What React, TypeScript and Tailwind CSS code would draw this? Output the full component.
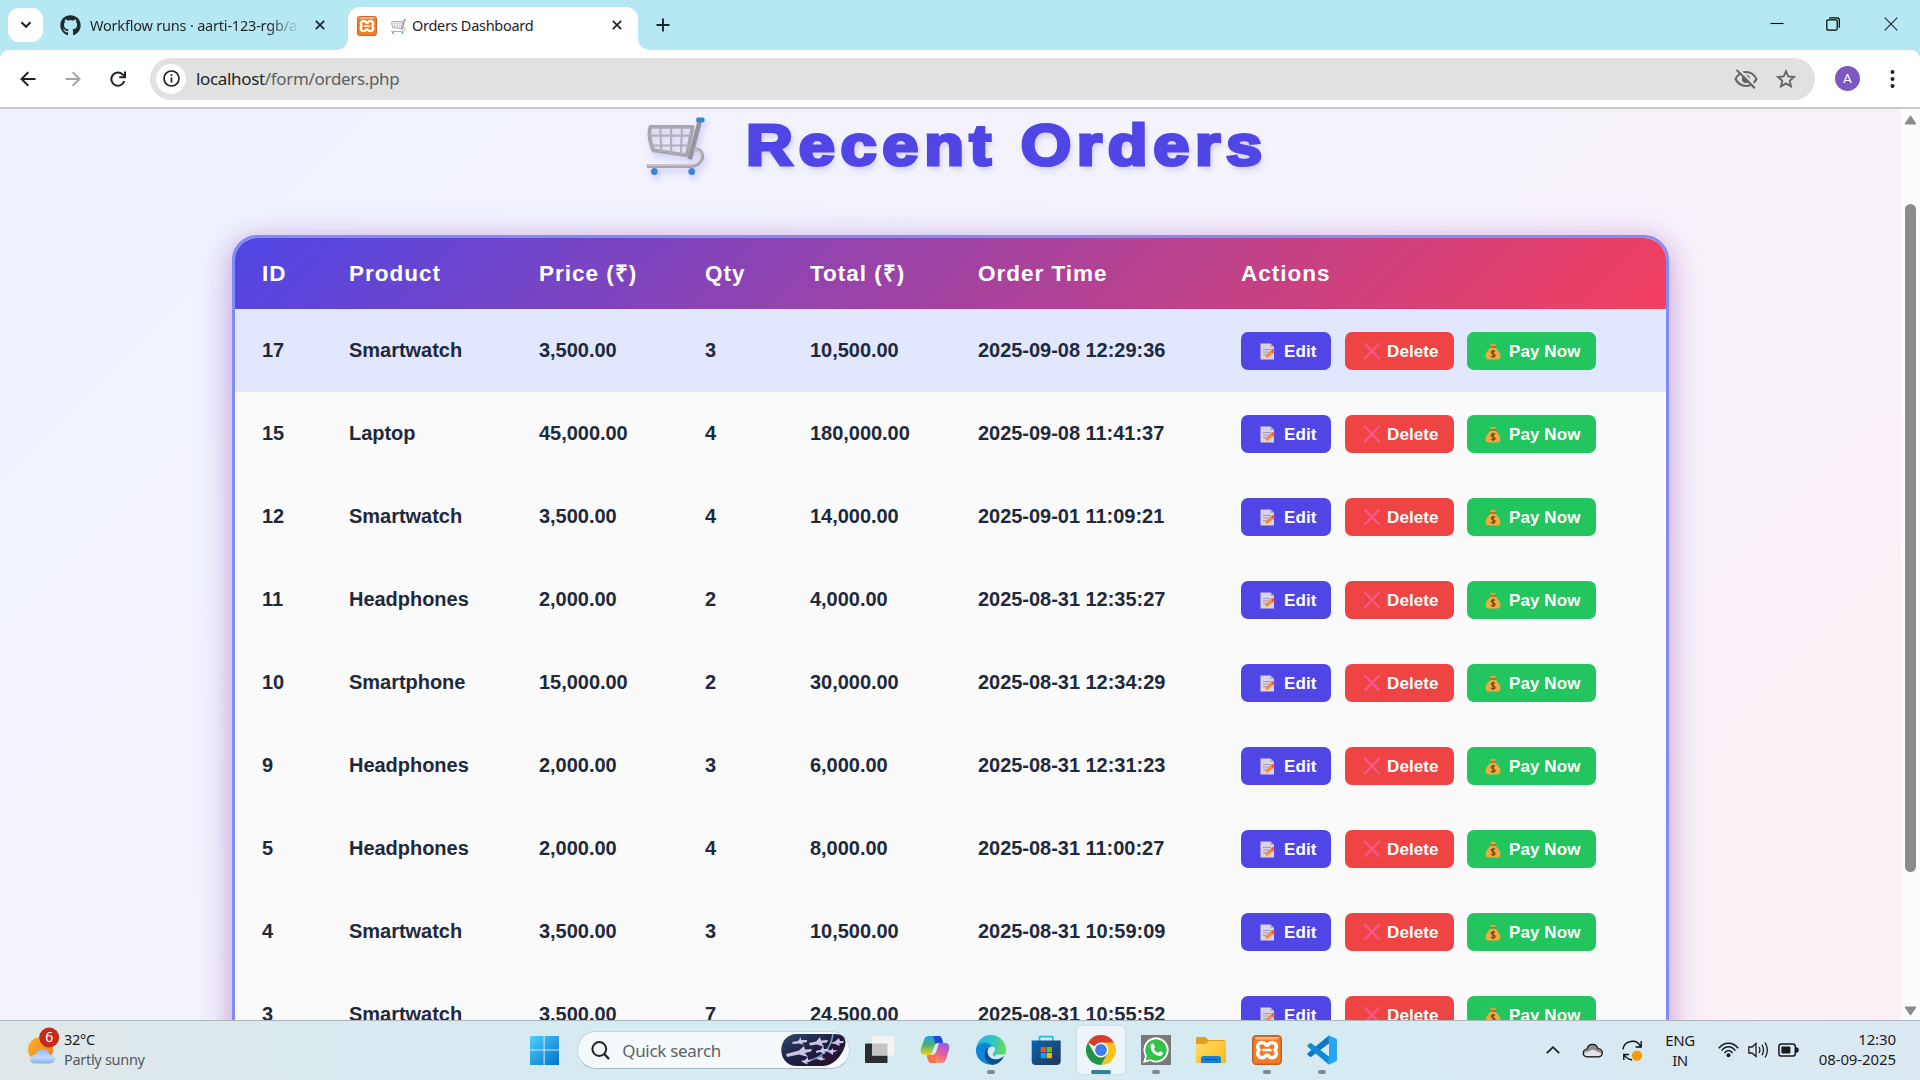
import React from "react";
import { FaGithub } from "react-icons/fa";

const orders = [
  ["17", "Smartwatch", "3,500.00", "3", "10,500.00", "2025-09-08 12:29:36"],
  ["15", "Laptop", "45,000.00", "4", "180,000.00", "2025-09-08 11:41:37"],
  ["12", "Smartwatch", "3,500.00", "4", "14,000.00", "2025-09-01 11:09:21"],
  ["11", "Headphones", "2,000.00", "2", "4,000.00", "2025-08-31 12:35:27"],
  ["10", "Smartphone", "15,000.00", "2", "30,000.00", "2025-08-31 12:34:29"],
  ["9", "Headphones", "2,000.00", "3", "6,000.00", "2025-08-31 12:31:23"],
  ["5", "Headphones", "2,000.00", "4", "8,000.00", "2025-08-31 11:00:27"],
  ["4", "Smartwatch", "3,500.00", "3", "10,500.00", "2025-08-31 10:59:09"],
  ["3", "Smartwatch", "3,500.00", "7", "24,500.00", "2025-08-31 10:55:52"],
];

const columns = ["ID", "Product", "Price (₹)", "Qty", "Total (₹)", "Order Time", "Actions"];

const rowGrid = "grid grid-cols-[87px_190px_166px_105px_168px_263px_1fr] items-center pl-[27px]";

function Cart({ className }: { className: string }) {
  return (
    <svg viewBox="0 0 60 60" className={className} fill="none">
      <path d="M4 10 L47 10 L41 39 L7 34 Q1 20 4 10Z" stroke="#a9a6ae" strokeWidth="3.8" strokeLinejoin="round" />
      <path d="M3.5 19 H45 M5 29 H43 M14 11 L15 35 M25 11 V37 M36 11 L35 38" stroke="#b3b0b6" strokeWidth="2.2" />
      <path d="M54 5 L44 43" stroke="#96939b" strokeWidth="4.6" />
      <path d="M49 33 C57 33 59 41 54 46 C52 49 48 50 44 50 H2" stroke="#aaa4ae" strokeWidth="3.8" strokeLinecap="round" />
      <path d="M49 33 C56 34 57 41 53 45 C51 48 48 49 44 49 H2" stroke="#d2cfd6" strokeWidth="1.3" strokeLinecap="round" />
      <rect x="50.5" y="0.5" width="8.5" height="5" rx="1.6" fill="#3a83d0" />
      <ellipse cx="8" cy="55.5" rx="3.4" ry="3.6" fill="#3d86d2" />
      <ellipse cx="46" cy="55.5" rx="3.4" ry="3.6" fill="#3d86d2" />
    </svg>
  );
}

function Memo() {
  return (
    <svg viewBox="0 0 16 17" className="h-[17px] w-4" fill="none">
      <path d="M0.5 0.5 H10.5 L14 4 V16.5 H0.5 Z" fill="#d9d3e3" />
      <path d="M10.5 0.5 L14 4 H10.5 Z" fill="#b3a9c0" />
      <path d="M3 6.5 H11 M3 9 H9 M3 11.5 H6" stroke="#9d96ac" strokeWidth="0.9" />
      <path d="M5.8 14 L12.2 8.6" stroke="#fb8c3c" strokeWidth="3.4" />
      <path d="M12 8.8 L14 7.2" stroke="#f4524d" strokeWidth="3.4" />
      <path d="M3.6 16.2 L4.6 13 L6.9 15.4 Z" fill="#fbd0a0" />
    </svg>
  );
}

function Cross() {
  return (
    <svg viewBox="0 0 18 18" className="h-[18px] w-[18px]" fill="none">
      <path d="M2 1.8 L16 16.2 M16 1.8 L2 16.2" stroke="#fb558a" strokeWidth="2.3" strokeLinecap="round" />
    </svg>
  );
}

function MoneyBag() {
  return (
    <svg viewBox="0 0 16 17" className="h-[17px] w-4" fill="none">
      <path d="M5 0.8 L7 1.6 L8 0.4 L9.4 1.6 L11 0.8 L10 4 H6 Z" fill="#f0a23a" />
      <path d="M5.8 4.4 H10.2 C13 7 15.5 10 15.5 13 C15.5 15.6 14 16.6 11.5 16.6 H4.5 C2 16.6 0.5 15.6 0.5 13 C0.5 10 3 7 5.8 4.4Z" fill="#efa93c" />
      <path d="M5.6 3.9 H10.4" stroke="#a5622a" strokeWidth="1.2" strokeLinecap="round" />
      <path d="M10 8.4 C9.3 7.6 6.3 7.5 6.3 9.3 C6.3 11.2 10.1 10.5 10.1 12.4 C10.1 14.2 6.7 14.1 6 13 M8.1 6.8 V15" stroke="#6b4324" strokeWidth="1.2" />
    </svg>
  );
}

function Xampp({ className }: { className: string }) {
  return (
    <svg viewBox="0 0 30 30" className={className} fill="none">
      <rect x="0.7" y="0.7" width="28.6" height="28.6" rx="3.5" fill="#f57a22" stroke="#b9602a" strokeWidth="1.4" />
      <path d="M2.5 2 H27.5 L25 4.5 H5 Z" fill="#fbb584" />
      <path
        d="M10.3 7.5 C5.8 7.5 4.4 11.5 7 15 C4.4 18.5 5.8 22.7 10.3 22.7 C13.6 22.7 13 20 15 20 C17 20 16.4 22.7 19.7 22.7 C24.2 22.7 25.6 18.5 23 15 C25.6 11.5 24.2 7.5 19.7 7.5 C16.4 7.5 17 10.2 15 10.2 C13 10.2 13.6 7.5 10.3 7.5 Z"
        stroke="white"
        strokeWidth="3.6"
        strokeLinejoin="round"
      />
      <path d="M11.5 15 H18.5" stroke="white" strokeWidth="2.6" strokeLinecap="round" />
    </svg>
  );
}

function CloseX({ className }: { className: string }) {
  return (
    <svg viewBox="0 0 10 10" className={className} fill="none" stroke="#1f2327" strokeWidth="1.7">
      <path d="M0.8 0.8 L9.2 9.2 M9.2 0.8 L0.8 9.2" />
    </svg>
  );
}

function TabStrip() {
  return (
    <div className="flex h-[50px] items-start bg-[#b5e8f2] pl-2 text-[#1f2327]">
      <div className="mt-2 flex h-[34px] w-[35px] items-center justify-center rounded-[11px] bg-white">
        <svg viewBox="0 0 12 8" className="h-[8px] w-[12px]" fill="none" stroke="#1f2327" strokeWidth="2.1">
          <path d="M1.5 1.3 L6 5.8 L10.5 1.3" />
        </svg>
      </div>
      <div className="flex h-[50px] w-[305px] items-center pl-[17px]">
        <FaGithub className="h-[21px] w-[21px] shrink-0 text-[#24292f]" />
        <div className="mt-[2px] ml-[9px] w-[210px] overflow-hidden whitespace-nowrap bg-gradient-to-r from-[#1f2327] from-85% to-transparent bg-clip-text text-[14.5px] tracking-[-0.2px] text-transparent">
          Workflow runs · aarti-123-rgb/a
        </div>
        <CloseX className="ml-[15px] h-[10px] w-[10px] shrink-0" />
      </div>
      <div className="relative mt-[7px] flex h-[43px] w-[290px] items-center rounded-t-[12px] bg-white pl-[9px]">
        <svg viewBox="0 0 12 12" className="absolute bottom-0 -left-3 h-3 w-3">
          <path d="M12 0 V12 H0 C7 12 12 7 12 0Z" fill="white" />
        </svg>
        <svg viewBox="0 0 12 12" className="absolute -right-3 bottom-0 h-3 w-3">
          <path d="M0 0 V12 H12 C5 12 0 7 0 0Z" fill="white" />
        </svg>
        <Xampp className="-mt-[6px] h-[20px] w-[20px]" />
        <Cart className="-mt-[5px] ml-[14px] h-[15px] w-[15px]" />
        <div className="-mt-[5px] ml-[6px] w-[200px] whitespace-nowrap text-[14.5px] tracking-[-0.28px]">Orders Dashboard</div>
        <CloseX className="-mt-[7px] h-[10px] w-[10px] shrink-0" />
      </div>
      <svg viewBox="0 0 14 14" className="mt-[18px] ml-[18px] h-[14px] w-[14px]" stroke="#1f2327" strokeWidth="1.9">
        <path d="M7 0.5 V13.5 M0.5 7 H13.5" />
      </svg>
      <div className="mt-[17px] ml-auto flex items-center">
        <svg viewBox="0 0 14 14" className="mr-[42px] h-[14px] w-[14px]" stroke="#000" strokeWidth="1.1">
          <path d="M0.5 6.5 H13.5" />
        </svg>
        <svg viewBox="0 0 14 14" className="mr-[44px] h-[14px] w-[14px]" fill="none" stroke="#000" strokeWidth="1.2">
          <rect x="0.8" y="2.8" width="10.4" height="10.4" rx="1.2" />
          <path d="M3.3 0.8 H11 Q13.3 0.8 13.3 3 V10.8" />
        </svg>
        <svg viewBox="0 0 14 14" className="mr-[22px] h-[14px] w-[14px]" stroke="#222" strokeWidth="1.1">
          <path d="M0.7 0.7 L13.3 13.3 M13.3 0.7 L0.7 13.3" />
        </svg>
      </div>
    </div>
  );
}

function Toolbar() {
  return (
    <div className="bg-[#b5e8f2]">
      <div className="flex h-[59px] items-center rounded-t-[9px] border-b-2 border-[#c9c9c9] bg-white pl-[20px] text-[#1f2327]">
        <svg viewBox="0 0 16 16" className="h-4 w-4" fill="none" stroke="#1f2327" strokeWidth="2">
          <path d="M15.5 8 H2 M8.3 1.2 L1.5 8 L8.3 14.8" />
        </svg>
        <svg viewBox="0 0 16 16" className="ml-[29px] h-4 w-4" fill="none" stroke="#a2a4a6" strokeWidth="2">
          <path d="M0.5 8 H14 M7.7 1.2 L14.5 8 L7.7 14.8" />
        </svg>
        <svg viewBox="0 0 16 16" className="ml-[29px] h-4 w-4" fill="none" stroke="#1f2327" strokeWidth="2">
          <path d="M14.3 10 A6.6 6.6 0 1 1 12.6 3.4 L14.5 5.3" />
          <path d="M15 0.5 V6.2 H9.3" />
        </svg>
        <div className="ml-[24px] flex h-[42px] w-[1665px] items-center rounded-full bg-[#e1e1e1] pl-[6px] pr-[19px]">
          <div className="flex h-[30px] w-[30px] items-center justify-center rounded-full bg-white">
            <svg viewBox="0 0 17 17" className="h-[17px] w-[17px]" fill="none" stroke="#1f2327" strokeWidth="1.7">
              <circle cx="8.5" cy="8.5" r="7.5" />
              <path d="M8.5 7.6 V12.6 M8.5 4.3 V6.1" />
            </svg>
          </div>
          <div className="mt-px ml-[10px] text-[17px] tracking-[-0.33px] text-[#5c5f61]">
            <span className="text-[#1f2327]">localhost</span>/form/orders.php
          </div>
          <svg viewBox="0 0 24 20" className="ml-auto h-[20px] w-[24px]" fill="none" stroke="#606366" strokeWidth="2">
            <path d="M1.5 10 C4 5 8 3 12 3 C16 3 20 5 22.5 10 C20 15 16 17 12 17 C8 17 4 15 1.5 10Z" />
            <circle cx="12" cy="10" r="3.7" fill="#606366" strokeWidth="1" />
            <path d="M4.8 0.2 L21.8 17.2" stroke="#e1e1e1" strokeWidth="2.2" />
            <path d="M2.5 0.9 L20.8 19.3" />
          </svg>
          <svg viewBox="0 0 20 20" className="ml-[18px] h-[20px] w-[20px]" fill="none" stroke="#606366" strokeWidth="1.8">
            <path d="M10 2.2 L12.3 7.5 L18 8 L13.7 11.8 L15 17.4 L10 14.4 L5 17.4 L6.3 11.8 L2 8 L7.7 7.5Z" />
          </svg>
        </div>
        <div className="ml-[20px] flex h-[25px] w-[25px] items-center justify-center rounded-full bg-[#7e57c2] font-[Roboto] text-[13.5px] text-white">A</div>
        <svg viewBox="0 0 5 20" className="ml-[30px] h-[20px] w-[5px]" fill="#1f2327">
          <circle cx="2.5" cy="3" r="2" />
          <circle cx="2.5" cy="10" r="2" />
          <circle cx="2.5" cy="17" r="2" />
        </svg>
      </div>
    </div>
  );
}

function Actions() {
  return (
    <div className="mt-px flex text-[17px] leading-[20px] tracking-[0.1px] text-white">
      <button className="flex h-[38px] w-[90px] items-center rounded-[7px] bg-[#4f46e5] pl-[19px]">
        <Memo />
        <span className="ml-2 pt-[2px]">Edit</span>
      </button>
      <button className="ml-[14px] flex h-[38px] w-[109px] items-center rounded-[7px] bg-[#ef4444] pl-[18px]">
        <Cross />
        <span className="ml-[6px] pt-[2px]">Delete</span>
      </button>
      <button className="ml-[13px] flex h-[38px] w-[129px] items-center rounded-[7px] bg-[#22c55e] pl-[18px]">
        <MoneyBag />
        <span className="ml-2 pt-[2px]">Pay Now</span>
      </button>
    </div>
  );
}

function OrdersPage() {
  return (
    <main className="flex h-[911px] overflow-hidden">
      <div className="flex flex-1 flex-col items-center overflow-hidden bg-[linear-gradient(135deg,#eef2ff_0%,#f5f3fc_45%,#fdf1f6_100%)] font-['Liberation_Sans',Arial,sans-serif] font-bold">
        <div className="flex h-[126px] w-full shrink-0 items-start pl-[646px]">
          <Cart className="mt-2 h-[59px] w-[60px] shrink-0 drop-shadow-[2px_4px_3px_rgba(79,70,229,0.25)]" />
          <h1 className="mt-[4px] ml-[40px] origin-left scale-x-[1.14] whitespace-nowrap text-[57px] leading-[64px] tracking-[5px] text-[#4f46e5] [-webkit-text-stroke:3.2px_#4f46e5] [text-shadow:2px_4px_6px_rgba(79,70,229,0.25)]">
            Recent Orders
          </h1>
        </div>
        <section className="h-[900px] w-[1437px] shrink-0 rounded-[25px] border-[3px] border-[#818cf8] bg-[#fafafa] shadow-[0_10px_38px_rgba(99,102,241,0.3),0_4px_25px_rgba(219,39,119,0.28)]">
          <div className={`${rowGrid} h-[71px] rounded-t-[22px] bg-[linear-gradient(135deg,#4f46e5,#f43f5e)] text-[22.5px] tracking-[1px] text-white`}>
            {columns.map((c) => (
              <div key={c}>{c}</div>
            ))}
          </div>
          {orders.map((row, i) => (
            <div key={row[0]} className={`${rowGrid} h-[83px] text-[20px] text-[#1e293b] ${i === 0 ? "bg-[#e0e7ff]" : ""}`}>
              {row.map((cell, j) => (
                <div key={j} className="pb-[2px] tracking-[-0.03px]">
                  {cell}
                </div>
              ))}
              <Actions />
            </div>
          ))}
        </section>
      </div>
      <div className="flex w-[19px] flex-col items-center bg-[#fcfcfc] pt-[6px] pb-[4px]">
        <svg viewBox="0 0 13 10" className="h-[10px] w-[13px]" fill="#8b8b8b" stroke="#8b8b8b" strokeLinejoin="round">
          <path d="M6.5 0.8 L12 9 H1Z" />
        </svg>
        <div className="mt-[79px] h-[668px] w-[11px] rounded-full bg-[#8b8b8b]" />
        <svg viewBox="0 0 13 10" className="mt-auto h-[10px] w-[13px]" fill="#8b8b8b" stroke="#8b8b8b" strokeLinejoin="round">
          <path d="M6.5 9.2 L12 1 H1Z" />
        </svg>
      </div>
    </main>
  );
}

function TaskCell({ children, bar, active }: { children: React.ReactNode; bar?: boolean; active?: boolean }) {
  return (
    <div className="flex w-[55.2px] justify-center">
      <div className={`flex h-[48px] w-[48px] flex-col items-center rounded-[5px] pt-[9px] ${active ? "bg-[#edf5fa] shadow-[0_0_1px_1px_rgba(120,150,170,0.12)]" : ""}`}>
        <div className="h-[30px] w-[30px]">{children}</div>
        {active && <div className="mt-[5px] h-1 w-5 rounded-full bg-[#2a8596]" />}
        {bar && <div className="mt-[5px] h-1 w-2 rounded-full bg-[#82888c]" />}
      </div>
    </div>
  );
}

function SearchArt() {
  return (
    <svg viewBox="0 0 66 32" className="h-8 w-[66px]">
      <defs>
        <linearGradient id="night" x1="0" y1="0" x2="1" y2="1">
          <stop offset="0" stopColor="#2c4a6c" />
          <stop offset="0.5" stopColor="#211c42" />
          <stop offset="1" stopColor="#2a1029" />
        </linearGradient>
        <clipPath id="pill">
          <path d="M16 0 H54 C62 0 66 5 64 12 C61 22 52 32 42 32 H16 C-5 32 -5 0 16 0Z" />
        </clipPath>
      </defs>
      <g clipPath="url(#pill)">
        <rect width="66" height="32" fill="url(#night)" />
        <path d="M52 0 C50 14 42 24 26 27" stroke="#6fa3c0" strokeWidth="1.6" fill="none" />
        <g fill="#c9c6e4">
          <path d="M11 8 L17 7 L20 3 L20 6 L26 6 L26 8 L21 9 L23 11 L18 9.5 L12 10Z" />
          <path d="M5 20 L18 16.5 L23 12 L24 15.5 L31 15 L30 17.5 L24 19 L27 23 L18 20.5 L6 23Z" />
          <path d="M28 9 L35 7.5 L39 3 L40 6.5 L47 6 L46 8.5 L41 9 L43 13 L36 10.5 L29 11.5Z" />
          <path d="M35 17 L40 15.5 L42 12 L43 15 L48 15 L47 17 L43 17.5 L44 20 L39 18 L35 19Z" />
          <path d="M49 9 L54 7.5 L58 4 L59 7 L63 7 L62 9 L58 9.5 L59 12 L54 10Z" />
          <path d="M45 17 L50 16 L52 14 L52 16 L57 16.5 L52 18.5 L52 21 L49 19Z" />
          <path d="M20 27 L24 26 L27 23 L27 26 L31 26.5 L26 28.5 L27 30.5 L23 29Z" />
          <path d="M35 24.5 L39 23 L42 22 L41 24 L45 25 L40 26.5Z" />
        </g>
      </g>
    </svg>
  );
}

function Taskbar() {
  return (
    <footer className="flex h-[60px] items-start border-t border-[#aab4ba] bg-[linear-gradient(90deg,#dfe7e8_0%,#dbe9ee_14%,#d6eaf2_30%,#d6eaf3_75%,#dbe8f1_100%)] text-[#1b1b1b]">
      <div className="flex w-[516px] pl-[27px] pt-[6px]">
        <svg viewBox="0 0 33 38" className="h-[38px] w-[33px]">
          <defs>
            <linearGradient id="sun" x1="0" y1="0" x2="1" y2="1">
              <stop offset="0" stopColor="#f6b62c" />
              <stop offset="1" stopColor="#f2791a" />
            </linearGradient>
            <linearGradient id="cloud" x1="0" y1="0" x2="0" y2="1">
              <stop offset="0" stopColor="#8fb8f2" />
              <stop offset="0.6" stopColor="#c3daf8" />
              <stop offset="1" stopColor="#88aeea" />
            </linearGradient>
          </defs>
          <circle cx="13.5" cy="22.5" r="12.5" fill="url(#sun)" />
          <path d="M8 36.5 C1 36.5 2 27.5 8 28 C10 20.5 21 20.5 22.5 27.5 C30 27.5 30 36.5 23 36.5Z" fill="url(#cloud)" />
          <circle cx="22.2" cy="10.5" r="10" fill="#c42b1c" />
          <text x="22.2" y="15.4" textAnchor="middle" fontSize="14" fill="white" fontFamily="Noto Sans">6</text>
        </svg>
        <div className="ml-1 pt-[2px] text-[14.5px] leading-5 tracking-[-0.3px]">
          <div>32°C</div>
          <div className="text-[#54595c]">Partly sunny</div>
        </div>
      </div>
      <div className="flex pt-[5px]">
        <TaskCell>
          <svg viewBox="0 0 30 30">
            <defs>
              <linearGradient id="win" x1="0" y1="0" x2="1" y2="1">
                <stop offset="0" stopColor="#4fd0fb" />
                <stop offset="1" stopColor="#0270cf" />
              </linearGradient>
            </defs>
            <path d="M2 1 H14.6 V14.6 H1 V2Z M15.6 1 H30 V14.6 H15.6Z M1 15.6 H14.6 V30 H1Z M15.6 15.6 H30 V30 H15.6Z" fill="url(#win)" />
          </svg>
        </TaskCell>
        <div className="mt-[5px] ml-[6px] flex h-[38px] w-[273px] items-center rounded-full border border-[#c3d5dd] border-b-[#a9b8c0] bg-[#f4f9fc] pl-[13px] pr-[2px]">
          <svg viewBox="0 0 19 19" className="h-[19px] w-[19px]" fill="none" stroke="#222" strokeWidth="2">
            <circle cx="8.3" cy="8" r="6.9" />
            <path d="M13.2 13 L18 18" strokeWidth="2.4" />
          </svg>
          <span className="mt-px ml-[12px] text-[17px] tracking-[-0.3px] text-[#5d6265]">Quick search</span>
          <div className="ml-auto">
            <SearchArt />
          </div>
        </div>
        <div className="ml-[2.5px] flex">
          <TaskCell>
            <svg viewBox="0 0 30 30">
              <rect x="0" y="8.5" width="22.5" height="19.5" rx="1" fill="#2c2d2e" />
              <rect x="7" y="1" width="22.5" height="19.5" rx="1" fill="#f4f4f4" />
              <rect x="7" y="8.5" width="15.5" height="12" fill="#c4c4c4" />
            </svg>
          </TaskCell>
          <TaskCell>
            <svg viewBox="0 0 30 30">
              <defs>
                <linearGradient id="cpA" x1="0" y1="0" x2="0" y2="1">
                  <stop offset="0" stopColor="#1b9ff0" />
                  <stop offset="0.5" stopColor="#4fb26b" />
                  <stop offset="1" stopColor="#f7d21b" />
                </linearGradient>
                <linearGradient id="cpB" x1="0.7" y1="0" x2="0.2" y2="1">
                  <stop offset="0" stopColor="#9b5cf0" />
                  <stop offset="0.5" stopColor="#ec5f92" />
                  <stop offset="1" stopColor="#fca34f" />
                </linearGradient>
              </defs>
              <path d="M14 1 H19 C21 1 22 3 23 8 H18 C16 8 15 9 14 12 L11 20 H5 C1 20 0 17 1 13 L4 5 C5 2 6 1 9 1Z" fill="url(#cpA)" />
              <path d="M13 1 H19 C21 1 22 3 23 8 H18 C17 8 16 8 15.5 9Z" fill="#2548d8" />
              <path d="M16 28 H11 C9 28 8 26 7 20 H12 C14 20 15 19 16 17 L19 8 H25 C29 8 30 11 29 15 L26 24 C25 27 24 28 21 28Z" fill="url(#cpB)" />
              <path d="M16 28 H11 C9 28 8 26 7 20 H12 C13 20 14 20 14.5 19Z" fill="#f8704a" />
            </svg>
          </TaskCell>
          <TaskCell bar>
            <svg viewBox="0 0 30 30">
              <defs>
                <linearGradient id="edA" x1="0" y1="0.2" x2="1" y2="0.4">
                  <stop offset="0" stopColor="#2bb2ea" />
                  <stop offset="0.5" stopColor="#2cc3cd" />
                  <stop offset="1" stopColor="#68dd53" />
                </linearGradient>
              </defs>
              <circle cx="15" cy="15" r="15" fill="url(#edA)" />
              <path d="M20 19.5 H31 V31 H14Z" fill="#d6eaf3" />
              <path d="M0 14 C2 7 12 5 17 12 C12 12 10 17 13 21 C16 26 24 25 28 21 C24 30 13 31 7 27 C2 24 0 20 0 14Z" fill="#1283d8" />
              <path d="M10 14 C7 20 9 27 16 30 C21 30 26 26 28 21 C24 25 16 26 13 21 C11 18 11 15 13 13Z" fill="#124e93" />
              <path d="M17 20 C16 18 19 17 19 14 C19 12 17 11 14 12 C11 14 11 18 13 21 C16 25 20 24 24 22.5 C21 22.5 18 22 17 20Z" fill="#d6eaf3" />
            </svg>
          </TaskCell>
          <TaskCell>
            <svg viewBox="0 0 30 30">
              <defs>
                <linearGradient id="store" x1="0" y1="0" x2="1" y2="1">
                  <stop offset="0" stopColor="#0b64b4" />
                  <stop offset="1" stopColor="#273455" />
                </linearGradient>
              </defs>
              <path d="M8.5 6.5 V2.5 Q8.5 1.7 9.3 1.7 H21 Q21.8 1.7 21.8 2.5 V6.5" fill="none" stroke="#28b6ee" strokeWidth="1.7" />
              <path d="M0.7 5.5 H29.7 V26 Q29.7 30 25.7 30 H4.7 Q0.7 30 0.7 26Z" fill="url(#store)" />
              <rect x="9.7" y="12" width="5.2" height="5.2" fill="#f25022" />
              <rect x="15.7" y="12" width="5.2" height="5.2" fill="#7fba00" />
              <rect x="9.7" y="18" width="5.2" height="5.2" fill="#00a4ef" />
              <rect x="15.7" y="18" width="5.2" height="5.2" fill="#ffb900" />
            </svg>
          </TaskCell>
          <TaskCell active>
            <svg viewBox="0 0 30 30">
              <path d="M15 15 L2 7.5 A15 15 0 0 1 28 7.5 Z" fill="#dc3a2e" />
              <path d="M15 7.5 H28 A15 15 0 0 1 15 30 L21.5 18.75Z" fill="#fcc21b" />
              <path d="M8.5 18.75 L2 7.5 A15 15 0 0 0 15 30 L21.5 18.75Z" fill="#219447" />
              <circle cx="15" cy="15" r="7.4" fill="white" />
              <circle cx="15" cy="15" r="5.9" fill="#3b7ded" />
            </svg>
          </TaskCell>
          <TaskCell bar>
            <div className="flex h-[30px] w-[30px] items-center justify-center bg-[#797979]">
              <svg viewBox="0 0 28 28" className="h-[28px] w-[28px]">
                <path d="M1 27 L3 20 A12.6 12.6 0 1 1 8 25Z" fill="white" />
                <path d="M3.5 24.5 L5 19.8 A10.7 10.7 0 1 1 8.5 23.2Z" fill="#35c04c" />
                <path d="M8.6 9.6 C9.4 7.4 10.8 7.4 11.5 7.8 L12.9 11 C12.9 11.9 11.7 12.6 11.8 13.1 C12.7 14.8 14.1 16 16 16.7 C16.8 16.6 17.4 15.3 18.1 15.2 L20.9 16.6 C21.3 18.5 19.3 20.1 17.4 20 C12.2 19.4 8 14.8 8.6 9.6Z" fill="white" />
              </svg>
            </div>
          </TaskCell>
          <TaskCell>
            <svg viewBox="0 0 30 30">
              <defs>
                <linearGradient id="folder" x1="0" y1="0" x2="1" y2="1">
                  <stop offset="0" stopColor="#ffdc6b" />
                  <stop offset="1" stopColor="#fcb912" />
                </linearGradient>
              </defs>
              <path d="M0 3.5 Q0 2 1.5 2 H9 L12.5 5 H28 Q30 5 30 7 V10 H0Z" fill="#dea11a" />
              <path d="M0 9 H10 L13 6 H28.5 Q30 6 30 7.5 V28 H0Z" fill="url(#folder)" />
              <path d="M5 28 V23.5 Q5 21 7.5 21 H22.5 Q25 21 25 23.5 V28Z" fill="#1680d8" />
              <path d="M8.5 24.5 H21.5" stroke="#0b5498" strokeWidth="1.3" />
            </svg>
          </TaskCell>
          <TaskCell bar>
            <Xampp className="h-[30px] w-[30px]" />
          </TaskCell>
          <TaskCell bar>
            <svg viewBox="0 0 30 30">
              <path d="M21.8 0.4 L22 8.5 L4.2 21.8 Q3.2 22.3 2.5 21.6 L0.6 19.8 Q0 19 0.6 18.3Z" fill="#0a78c0" />
              <path d="M21.8 29.6 L22 21.5 L4.2 8.2 Q3.2 7.7 2.5 8.4 L0.6 10.2 Q0 11 0.6 11.7Z" fill="#0f8ad6" />
              <path d="M21.6 0.3 L28.9 3.6 Q30 4.2 30 5.4 V24.6 Q30 25.8 28.9 26.4 L21.6 29.7 Q22 29 22 28 V2 Q22 1 21.6 0.3Z" fill="#27a5f2" />
            </svg>
          </TaskCell>
        </div>
      </div>
      <div className="ml-auto flex h-[58px] items-center pr-[24px]">
        <svg viewBox="0 0 14 8" className="h-[8px] w-[14px]" fill="none" stroke="#1b1b1b" strokeWidth="1.7">
          <path d="M0.8 7.2 L7 1.2 L13.2 7.2" />
        </svg>
        <svg viewBox="0 0 21 16" className="ml-[22px] h-[16px] w-[21px]">
          <path d="M5 14.8 C-0.2 14.8 0 7.5 5 7 C6.5 0.8 14.5 0.8 15.8 6.5 C22 7 21.5 14.8 16.5 14.8Z" fill="#8d8d8d" stroke="#111" strokeWidth="1.2" />
          <path d="M2 11 L11 7.5 L19.6 11.5 Q19 14 16.5 14 H5 Q2.5 14 2 11Z" fill="#e3e3e3" />
        </svg>
        <svg viewBox="0 0 21 21" className="ml-[19px] h-[21px] w-[21px]" fill="none" stroke="#111" strokeWidth="1.4">
          <path d="M1 9.5 C2 0 15 -1.5 18.6 6.5 M19.2 1 V7 H13.6 M1.8 20 V14.5 H7 M2 14.5 C4 18 6.5 19.6 10 19.8" />
          <circle cx="15" cy="15.6" r="5.2" fill="#fb9a09" stroke="none" />
        </svg>
        <div className="ml-[13px] w-[48px] text-center text-[15px] leading-5 tracking-[-0.4px]">
          ENG
          <br />
          IN
        </div>
        <svg viewBox="0 0 21 16" className="ml-[14px] h-[16px] w-[21px]" fill="none" stroke="#1b1b1b" strokeWidth="1.5">
          <path d="M0.8 6.3 C6 -0.6 15 -0.6 20.2 6.3 M3.6 8.6 C7.5 3.3 13.5 3.3 17.4 8.6 M6.5 11 C8.8 7.8 12.2 7.8 14.5 11" />
          <circle cx="10.5" cy="13.3" r="2" fill="#1b1b1b" stroke="none" />
        </svg>
        <svg viewBox="0 0 21 18" className="ml-[9px] h-[18px] w-[21px]" fill="none" stroke="#1b1b1b" strokeWidth="1.3">
          <path d="M0.8 6 H4 L8 2.5 V15.5 L4 12 H0.8Z M11 6 Q12.8 9 11 12 M14 3.8 Q17 9 14 14.2 M17 1.5 Q21.8 9 17 16.5" />
        </svg>
        <svg viewBox="0 0 21 14" className="ml-[9px] h-[14px] w-[21px]" fill="none" stroke="#1b1b1b" strokeWidth="1.5">
          <rect x="0.9" y="1" width="16.4" height="12" rx="2.6" />
          <rect x="3.4" y="3.5" width="9" height="7" rx="1" fill="#1b1b1b" stroke="none" />
          <path d="M18.4 5 Q20 5 20 7 Q20 9 18.4 9Z" fill="#1b1b1b" />
        </svg>
        <div className="-mt-[2px] w-[97px] text-right text-[15px] leading-5 tracking-[-0.1px] whitespace-nowrap">
          12:30
          <br />
          08-09-2025
        </div>
      </div>
    </footer>
  );
}

export default function App() {
  return (
    <div className="h-[1080px] w-[1920px] overflow-hidden font-['Noto_Sans','Open_Sans',sans-serif]">
      <TabStrip />
      <Toolbar />
      <OrdersPage />
      <Taskbar />
    </div>
  );
}
